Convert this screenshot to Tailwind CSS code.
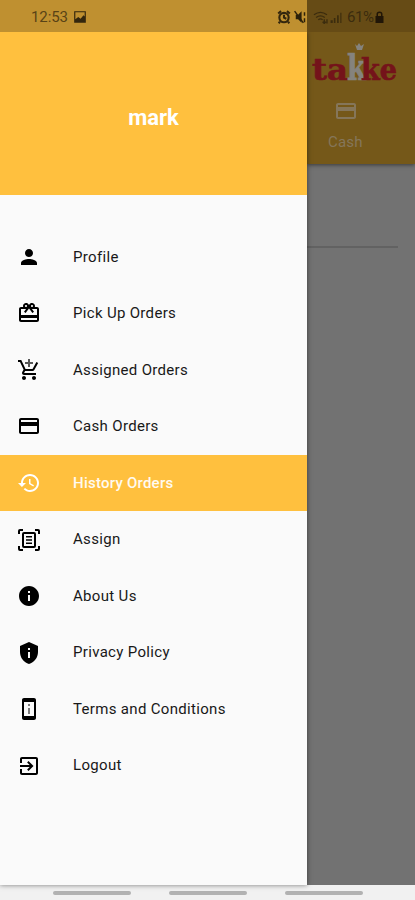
<!DOCTYPE html>
<html lang="en">
<head>
<meta charset="utf-8">
<title>Orders menu</title>
<script src="https://cdn.jsdelivr.net/npm/@tailwindcss/browser@4"></script>
</head>
<body class="font-[Roboto,sans-serif]">
<div class="relative flex h-[900px] w-[415px] flex-col overflow-hidden bg-[#f1f1f1]">
  <!-- Status bar -->
  <header class="relative z-20 flex h-8 shrink-0 items-center bg-[linear-gradient(90deg,#bf9030_307px,#664b15_307px)] pt-0.5 text-[#594316]">
    <span class="ml-[31px] w-[38px] text-[15px] tracking-[-0.1px]">12:53</span>
    <svg class="ml-1 size-[14px] text-[#33260d]" viewBox="0 0 24 24" fill="currentColor"><path fill-rule="evenodd" d="M2 2h20v20H2zM4 4v12l5-4 4 3 5-6 2 2V4z"/></svg>
    <svg class="ml-[190px] size-[14px] text-[#33260d]" viewBox="0 0 24 24" fill="none" stroke="currentColor" stroke-width="3.6"><circle cx="12" cy="13" r="8"/><path d="M12 8v5l4 2M2 6l5-4M22 6l-5-4M5 20l-2 3M19 20l2 3"/></svg>
    <svg class="ml-[3px] size-[14px] text-[#2b200a]" viewBox="0 0 24 24" fill="currentColor"><path d="M3 8h4l6-6v20l-6-6H3z"/><path d="M1 2l15 20M18 4v6M18 14v7" stroke="currentColor" stroke-width="2.5"/></svg>
    <svg class="ml-[5px] h-[13px] w-[16px] text-[#3b2c0e]" viewBox="0 0 28 24" fill="none" stroke="currentColor" stroke-width="2.5"><path d="M1 7q12-9 24 0M5 12q8-6 16 0M9 16q4-3 8 0M20 15v8m-3-3 3 3 3-3M25 23v-8"/></svg>
    <svg class="h-[13px] w-[14px] text-[#3b2c0e]" viewBox="0 0 24 24" fill="currentColor"><path d="M2 17h4v5H2zM8 13h3v9H8zM14 8h3v14h-3zM20 3h2v19h-2z"/></svg>
    <span class="ml-1 w-[28px] text-[15px] tracking-[-0.4px] text-[#3b2c0e]">61%</span>
    <svg class="h-[13px] w-[9px] text-[#211607]" viewBox="0 0 18 26" fill="currentColor"><path fill-rule="evenodd" d="M1 10h2V6q0-5 6-5t6 5v4h2v14H1zm5 0h6V6q0-2-3-2T6 6z"/></svg>
  </header>

  <div class="flex h-[853px] shrink-0">
    <!-- Navigation drawer -->
    <nav class="relative z-10 flex w-[307px] shrink-0 flex-col bg-[#fafafa] shadow-[0_0_5px_rgba(0,0,0,0.5)]">
      <div class="flex h-[163px] shrink-0 items-center justify-center bg-[#ffc03e] pt-[7px] text-[22px] font-bold text-white">mark</div>
      <ul class="mt-[33.500px] flex flex-col text-[15px] tracking-[0.32px] text-[#181818] [&_svg]:size-6 [&_svg]:fill-current [&>li]:flex [&>li]:h-[56.56px] [&>li]:items-center [&>li]:gap-[32.5px] [&>li]:pl-[16.5px] [&_svg]:text-black">
        <li><svg viewBox="0 0 24 24"><path d="M12 12c2.21 0 4-1.79 4-4s-1.79-4-4-4-4 1.79-4 4 1.79 4 4 4zm0 2c-2.67 0-8 1.34-8 4v2h16v-2c0-2.66-5.33-4-8-4z"/></svg><span>Profile</span></li>
        <li><svg viewBox="0 0 24 24"><path d="M20 6h-2.18c.11-.31.18-.65.18-1 0-1.66-1.34-3-3-3-1.05 0-1.96.54-2.5 1.35l-.5.67-.5-.68C10.96 2.54 10.05 2 9 2 7.34 2 6 3.34 6 5c0 .35.07.69.18 1H4c-1.11 0-1.99.89-1.99 2L2 19c0 1.11.89 2 2 2h16c1.11 0 2-.89 2-2V8c0-1.11-.89-2-2-2zm-5-2c.55 0 1 .45 1 1s-.45 1-1 1-1-.45-1-1 .45-1 1-1zM9 4c.55 0 1 .45 1 1s-.45 1-1 1-1-.45-1-1 .45-1 1-1zm11 15H4v-2h16v2zm0-5H4V8h5.080L7 10.830 8.620 12 11 8.760l1-1.360 1 1.360L15.380 12 17 10.830 14.920 8H20v6z"/></svg><span>Pick Up Orders</span></li>
        <li><svg viewBox="0 0 24 24"><path d="M11 9h2V6h3V4h-3V1h-2v3H8v2h3v3z" fill-opacity=".65"/><path d="M7 18c-1.1 0-1.99.9-1.99 2S5.9 22 7 22s2-.9 2-2-.9-2-2-2zm10 0c-1.1 0-1.99.9-1.99 2s.89 2 1.99 2 2-.9 2-2-.9-2-2-2zm-9.83-3.25l.03-.12.9-1.63h7.45c.75 0 1.41-.41 1.75-1.03l3.86-7.01L19.42 4h-.01l-1.1 2-2.76 5H8.53l-.13-.27L6.16 6l-.95-2-.94-2H1v2h2l3.6 7.59-1.35 2.45c-.16.28-.25.61-.25.96 0 1.1.9 2 2 2h12v-2H7.42c-.13 0-.25-.11-.25-.25z"/></svg><span>Assigned Orders</span></li>
        <li><svg viewBox="0 0 24 24"><path d="M20 4H4c-1.11 0-1.99.89-1.99 2L2 18c0 1.11.89 2 2 2h16c1.11 0 2-.89 2-2V6c0-1.11-.89-2-2-2zm0 14H4v-6h16v6zm0-10H4V6h16v2z"/></svg><span>Cash Orders</span></li>
        <li class="bg-[#ffc03e] font-medium tracking-[0.24px] text-[#fffaf0] [&>svg]:!text-white"><svg viewBox="0 0 24 24"><path d="M13 3c-4.97 0-9 4.03-9 9H1l3.89 3.89.07.14L9 12H6c0-3.87 3.13-7 7-7s7 3.13 7 7-3.13 7-7 7c-1.93 0-3.68-.79-4.94-2.06l-1.42 1.42C8.27 19.99 10.51 21 13 21c4.97 0 9-4.03 9-9s-4.03-9-9-9zm-1 5v5l4.28 2.54.72-1.21-3.5-2.08V8H12z"/></svg><span>History Orders</span></li>
        <li><svg viewBox="0 0 24 24"><path fill-rule="evenodd" d="M7 4h10a2 2 0 0 1 2 2v12a2 2 0 0 1-2 2H7a2 2 0 0 1-2-2V6a2 2 0 0 1 2-2zm0 2v12h10V6zM9 8h6v1.5H9zm0 3.2h6v1.6H9zm0 3.3h6V16H9zM1 6V3a2 2 0 0 1 2-2h3v2H3v3zM18 1h3a2 2 0 0 1 2 2v3h-2V3h-3zM1 18h2v3h3v2H3a2 2 0 0 1-2-2zM21 18h2v3a2 2 0 0 1-2 2h-3v-2h3z"/></svg><span>Assign</span></li>
        <li><svg viewBox="0 0 24 24"><path d="M12 2C6.48 2 2 6.48 2 12s4.48 10 10 10 10-4.48 10-10S17.52 2 12 2zm1 15h-2v-6h2v6zm0-8h-2V7h2v2z"/></svg><span>About Us</span></li>
        <li><svg viewBox="0 0 24 24"><path d="M12 1L3 5v6c0 5.55 3.84 10.74 9 12 5.16-1.26 9-6.45 9-12V5l-9-4zm-1 6h2v2h-2V7zm0 4h2v6h-2v-6z"/></svg><span>Privacy Policy</span></li>
        <li><svg viewBox="0 0 24 24"><path d="M17 1.010L7 1c-1.100 0-2 .9-2 2v18c0 1.100.9 2 2 2h10c1.100 0 2-.9 2-2V3c0-1.100-.9-1.990-2-1.990zM17 19H7V5h10v14z"/><path d="M13 7h-2v2h2V7zm0 4h-2v6h2v-6z" fill-opacity=".5"/></svg><span>Terms and Conditions</span></li>
        <li><svg viewBox="0 0 24 24"><path d="M10.090 15.590L11.500 17l5-5-5-5-1.410 1.410L12.670 11H3v2h9.670l-2.580 2.590zM19 3H5c-1.110 0-2 .9-2 2v4h2V5h14v14H5v-4H3v4c0 1.100.89 2 2 2h14c1.100 0 2-.9 2-2V5c0-1.100-.9-2-2-2z"/></svg><span>Logout</span></li>
      </ul>
    </nav>

    <!-- Dimmed page behind the drawer -->
    <main class="flex grow flex-col bg-[#727272]">
      <div class="flex h-[132px] shrink-0 flex-col bg-[#755819] shadow-[0_1px_4px_rgba(0,0,0,0.5)]">
        <svg class="ml-[5px] mt-[8px] h-[46px] w-[88px] shrink-0 overflow-visible" viewBox="0 0 88 46" font-family="'DejaVu Serif',serif" font-weight="bold">
          <text y="39.500" font-size="29" fill="#74131a" stroke="#74131a" stroke-width=".7"><tspan x="0" textLength="36" lengthAdjust="spacingAndGlyphs">ta</tspan><tspan x="35" font-size="35" fill="#85837d" stroke="#85837d" textLength="19" lengthAdjust="spacingAndGlyphs">k</tspan><tspan x="49" textLength="36" lengthAdjust="spacingAndGlyphs">ke</tspan></text>
          <path d="M43 4l2 2 2-3 2 3 3-2-2 6h-5z" fill="#85837d"/>
        </svg>
        <div class="mt-[13px] ml-[28px] flex w-[22px] justify-center"><svg class="size-6 shrink-0 fill-[#85765a]" viewBox="0 0 24 24"><path d="M20 4H4c-1.110 0-1.990.89-1.990 2L2 18c0 1.110.89 2 2 2h16c1.110 0 2-.89 2-2V6c0-1.110-.89-2-2-2zm0 14H4v-6h16v6zm0-10H4V6h16v2z"/></svg></div>
        <span class="ml-[21px] mt-[9px] text-[15px] leading-5 tracking-[0.2px] text-[#85765a]">Cash</span>
      </div>
      <div class="mr-[17px] mt-[82px] h-[2px] bg-[#626262]"></div>
    </main>
  </div>

  <!-- System navigation -->
  <footer class="flex grow items-center justify-center gap-[38px] pt-px">
    <i class="h-1 w-[78px] rounded-full bg-[#b2b2b2]"></i><i class="h-1 w-[78px] rounded-full bg-[#b2b2b2]"></i><i class="h-1 w-[78px] rounded-full bg-[#b2b2b2]"></i>
  </footer>
</div>
</body>
</html>
